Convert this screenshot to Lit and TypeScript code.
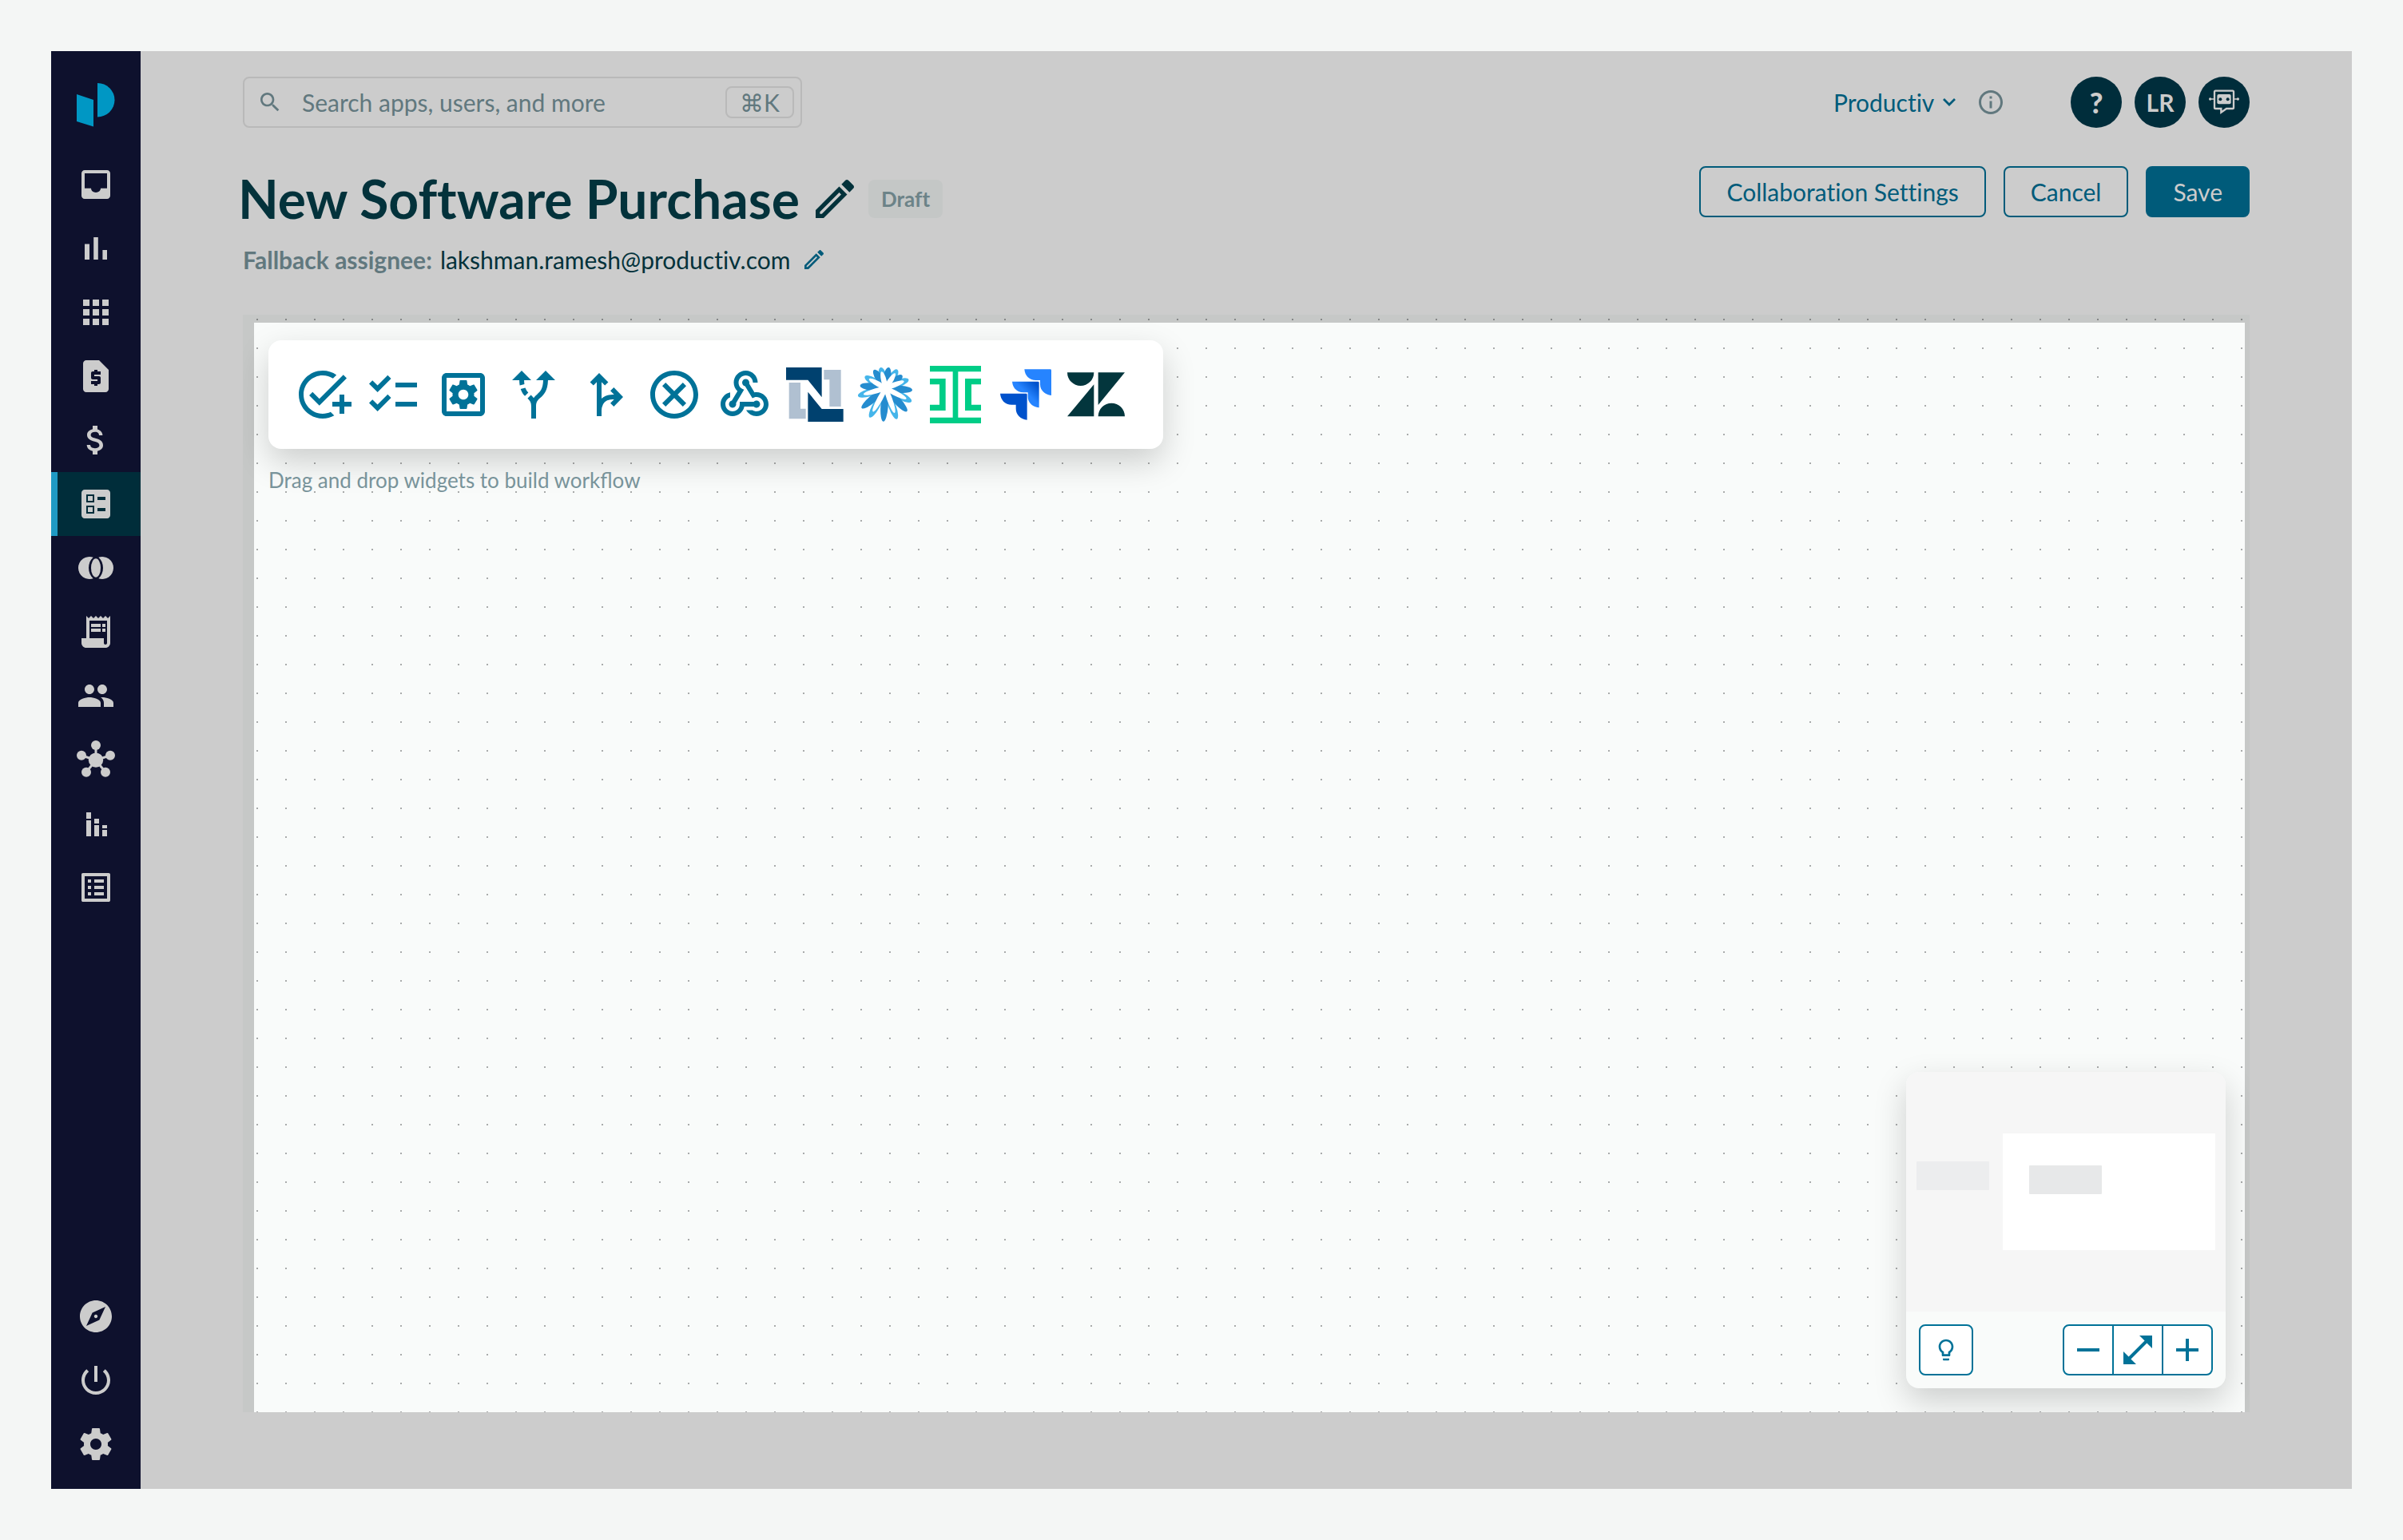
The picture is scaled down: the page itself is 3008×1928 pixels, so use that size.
import { LitElement, html, css, svg, type TemplateResult } from 'lit';
import { customElement, property } from 'lit/decorators.js';
import { classMap } from 'lit/directives/class-map.js';

const GEAR =
  'M19.43 12.98c.04-.32.07-.64.07-.98s-.03-.66-.07-.98l2.11-1.65c.19-.15.24-.42.12-.64l-2-3.46c-.12-.22-.39-.3-.61-.22l-2.49 1c-.52-.4-1.08-.73-1.69-.98l-.38-2.65C14.46 2.18 14.25 2 14 2h-4c-.25 0-.46.18-.49.42l-.38 2.65c-.61.25-1.17.59-1.69.98l-2.49-1c-.23-.09-.49 0-.61.22l-2 3.46c-.13.22-.07.49.12.64l2.11 1.65c-.04.32-.07.65-.07.98s.03.66.07.98l-2.11 1.65c-.19.15-.24.42-.12.64l2 3.46c.12.22.39.3.61.22l2.49-1c.52.4 1.08.73 1.69.98l.38 2.65c.03.24.24.42.49.42h4c.25 0 .46-.18.49-.42l.38-2.65c.61-.25 1.17-.59 1.69-.98l2.49 1c.23.09.49 0 .61-.22l2-3.46c.12-.22.07-.49-.12-.64l-2.11-1.65zM12 15.5c-1.93 0-3.5-1.57-3.5-3.5s1.57-3.5 3.5-3.5 3.5 1.57 3.5 3.5-1.57 3.5-3.5 3.5z';
const PENCIL =
  'M14.06 9.02l.92.92L5.92 19H5v-.92l9.06-9.06M17.66 3c-.25 0-.51.1-.7.29l-1.83 1.83 3.75 3.75 1.83-1.83c.39-.39.39-1.02 0-1.41l-2.34-2.34c-.2-.2-.45-.29-.71-.29zm-3.6 3.19L3 17.25V21h3.75L17.81 9.94l-3.75-3.75z';

const path = (d: string) => svg`<path d=${d}></path>`;

const hubArms: [number, number][] = [[12, 3], [3, 9.4], [21, 9.4], [6, 19.9], [18, 19.9]];

/** Glyphs on a 24 unit grid. */
const icons: Record<string, TemplateResult> = {
  inbox: path('M19 3H4.99c-1.11 0-1.98.89-1.98 2L3 19c0 1.1.88 2 1.99 2H19c1.1 0 2-.9 2-2V5c0-1.11-.9-2-2-2zm0 11.4h-4c0 1.46-1.34 2.6-3 2.6s-3-1.14-3-2.6H4.99V5H19v9.4z'),
  insights: path('M5 9.2h3V19H5zM10.6 5h2.8v14h-2.8zm5.6 8H19v6h-2.8z'),
  apps: path('M4 8h4V4H4v4zm6 12h4v-4h-4v4zm-6 0h4v-4H4v4zm0-6h4v-4H4v4zm6 0h4v-4h-4v4zm6-10v4h4V4h-4zm-6 4h4V4h-4v4zm6 6h4v-4h-4v4zm0 6h4v-4h-4v4z'),
  quote: path('M14 2H6c-1.1 0-1.99.9-1.99 2L4 20c0 1.1.89 2 1.99 2H18c1.1 0 2-.9 2-2V8l-6-6zm1 9h-4v1h3c.55 0 1 .45 1 1v3c0 .55-.45 1-1 1h-1v1h-2v-1H9v-2h4v-1h-3c-.55 0-1-.45-1-1v-3c0-.55.45-1 1-1h1V8h2v1h2v2z'),
  spend: path('M11.8 10.9c-2.27-.59-3-1.2-3-2.15 0-1.09 1.01-1.85 2.7-1.85 1.78 0 2.44.85 2.5 2.1h2.21c-.07-1.72-1.12-3.3-3.21-3.81V3h-3v2.16c-1.94.42-3.5 1.68-3.5 3.61 0 2.31 1.91 3.46 4.7 4.13 2.5.6 3 1.48 3 2.41 0 .69-.49 1.79-2.7 1.79-2.06 0-2.87-.92-2.98-2.1h-2.2c.12 2.19 1.76 3.42 3.68 3.83V21h3v-2.15c1.95-.37 3.5-1.5 3.5-3.55 0-2.84-2.43-3.81-4.7-4.4z'),
  workflows: path('M13 9.5h5v-2h-5v2zm0 7h5v-2h-5v2zm6 4.5H5c-1.1 0-2-.9-2-2V5c0-1.1.9-2 2-2h14c1.1 0 2 .9 2 2v14c0 1.1-.9 2-2 2zM6 11h5V6H6v5zm1-4h3v3H7V7zM6 18h5v-5H6v5zm1-4h3v3H7v-3z'),
  overlap: svg`<path d="M10.33 5.4A7 7 0 1 0 10.33 18.6C8.5 17 7.5 14.6 7.5 12S8.5 7 10.33 5.4zM13.67 5.4A7 7 0 1 1 13.67 18.6C15.5 17 16.5 14.6 16.5 12S15.5 7 13.67 5.4z"></path><ellipse cx="12" cy="12" rx="3" ry="5.9"></ellipse>`,
  receipt: path('M19.5 3.5L18 2l-1.5 1.5L15 2l-1.5 1.5L12 2l-1.5 1.5L9 2 7.5 3.5 6 2v14H3v3c0 1.66 1.34 3 3 3h12c1.66 0 3-1.34 3-3V2l-1.5 1.5zM19 19c0 .55-.45 1-1 1s-1-.45-1-1v-3H8V5h11v14zM9 7h6v2H9zm7 0h2v2h-2zm-7 3h6v2H9zm7 0h2v2h-2z'),
  people: path('M16 11c1.66 0 2.99-1.34 2.99-3S17.66 5 16 5c-1.66 0-3 1.34-3 3s1.34 3 3 3zm-8 0c1.66 0 2.99-1.34 2.99-3S9.66 5 8 5C6.34 5 5 6.34 5 8s1.34 3 3 3zm0 2c-2.33 0-7 1.17-7 3.5V19h14v-2.5c0-2.33-4.67-3.5-7-3.5zm8 0c-.29 0-.62.02-.97.05 1.16.84 1.97 1.97 1.97 3.45V19h6v-2.5c0-2.33-4.67-3.5-7-3.5z'),
  hub: svg`<circle cx="12" cy="12.3" r="4.6"></circle>${hubArms.map(
    ([x, y]) => svg`<circle cx=${x} cy=${y} r="3"></circle><path d=${`M12 12.3L${x} ${y}`} stroke="currentColor" stroke-width="1.5"></path>`
  )}`,
  stacked: path('M6 10h3v10H6zM6 5h3v4H6zm10 11h3v4h-3zm0-3h3v2h-3zm-5 0h3v7h-3zm0-4h3v3h-3z'),
  list: path('M19 5v14H5V5h14m1.1-2H3.9c-.5 0-.9.4-.9.9v16.2c0 .4.4.9.9.9h16.2c.4 0 .9-.5.9-.9V3.9c0-.5-.5-.9-.9-.9zM11 7h6v2h-6V7zm0 4h6v2h-6v-2zm0 4h6v2h-6zM7 7h2v2H7zm0 4h2v2H7zm0 4h2v2H7z'),
  explore: path('M12 10.9c-.61 0-1.1.49-1.1 1.1s.49 1.1 1.1 1.1c.61 0 1.1-.49 1.1-1.1s-.49-1.1-1.1-1.1zM12 2C6.48 2 2 6.48 2 12s4.48 10 10 10 10-4.48 10-10S17.52 2 12 2zm2.19 12.19L6 18l3.81-8.19L18 6l-3.81 8.19z'),
  power: path('M13 3h-2v10h2V3zm4.83 2.17l-1.42 1.42C17.99 7.86 19 9.81 19 12c0 3.87-3.13 7-7 7s-7-3.13-7-7c0-2.19 1.01-4.14 2.58-5.42L6.17 5.17C4.23 6.82 3 9.26 3 12c0 4.97 4.03 9 9 9s9-4.03 9-9c0-2.74-1.23-5.18-3.17-6.83z'),
  settings: path(GEAR),
  search: path('M15.5 14h-.79l-.28-.27C15.41 12.59 16 11.11 16 9.5 16 5.91 13.09 3 9.5 3S3 5.91 3 9.5 5.91 16 9.5 16c1.61 0 3.09-.59 4.23-1.57l.27.28v.79l5 4.99L20.49 19l-4.99-5zm-6 0C7.01 14 5 11.99 5 9.5S7.01 5 9.5 5 14 7.01 14 9.5 11.99 14 9.5 14z'),
  info: path('M11 7h2v2h-2zm0 4h2v6h-2zm1-9C6.48 2 2 6.48 2 12s4.48 10 10 10 10-4.48 10-10S17.52 2 12 2zm0 18c-4.41 0-8-3.59-8-8s3.59-8 8-8 8 3.59 8 8-3.59 8-8 8z'),
  pencil: path(PENCIL),
  task: path('M22 5.18L10.59 16.6l-4.24-4.24 1.41-1.41 2.83 2.83 10-10L22 5.18zM12 20c-4.41 0-8-3.59-8-8s3.59-8 8-8c1.57 0 3.04.46 4.28 1.25l1.45-1.45C16.1 2.67 14.13 2 12 2 6.48 2 2 6.48 2 12s4.48 10 10 10c1.73 0 3.36-.44 4.78-1.22l-1.5-1.5c-1 .46-2.11.72-3.28.72zm7-5h-3v2h3v3h2v-3h3v-2h-3v-3h-2v3z'),
  checklist: path('M22 7h-9v2h9V7zm0 8h-9v2h9v-2zM5.54 11L2 7.46l1.41-1.41 2.12 2.12 4.24-4.24 1.41 1.41L5.54 11zm0 8L2 15.46l1.41-1.41 2.12 2.12 4.24-4.24 1.41 1.41L5.54 19z'),
  automation: svg`<path fill-rule="evenodd" d="M5 3h14c1.1 0 2 .9 2 2v14c0 1.1-.9 2-2 2H5c-1.1 0-2-.9-2-2V5c0-1.1.9-2 2-2zM5 5v14h14V5z"></path><path transform="translate(4.8 4.8) scale(.6)" d=${GEAR}></path>`,
  branch: path('M9.78 11.16l-1.42 1.42c-.68-.69-1.34-1.58-1.79-2.94l1.94-.49c.32.89.77 1.5 1.27 2.01zM11 6L7 2 3 6h3.02c.02.81.08 1.54.19 2.17l1.94-.49C8.08 7.2 8.03 6.63 8.02 6H11zm10 0l-4-4-4 4h2.99c-.1 3.68-1.28 4.75-2.54 5.88-.5.44-1.01.92-1.45 1.55-.34-.49-.73-.88-1.13-1.24L9.46 13.6c.93.85 1.54 1.54 1.54 3.4v5h2v-5c0-2.02.71-2.66 1.79-3.63 1.38-1.24 3.08-2.78 3.2-7.37H21z'),
  fork: svg`<path d="M10 21V4.5M6.9 7.5L10 4.4l3.1 3.1M10 18.5C10.2 14.8 12.4 13 15.6 13h2.6M15.4 9.7l3.2 3.3-3.2 3.3" fill="none" stroke="currentColor" stroke-width="2"></path>`,
  stop: path('M12 2C6.47 2 2 6.47 2 12s4.47 10 10 10 10-4.47 10-10S17.53 2 12 2zm0 18c-4.41 0-8-3.59-8-8s3.59-8 8-8 8 3.59 8 8-3.59 8-8 8zm3.59-13L12 10.59 8.41 7 7 8.41 10.59 12 7 15.59 8.41 17 12 13.41 15.59 17 17 15.59 13.41 12 17 8.41z'),
  webhook: path('M10 15h5.88c.27-.31.67-.5 1.12-.5.83 0 1.5.67 1.5 1.5s-.67 1.5-1.5 1.5c-.44 0-.84-.19-1.12-.5H11.9c-.46 2.28-2.48 4-4.9 4-2.76 0-5-2.24-5-5 0-2.42 1.72-4.44 4-4.9v2.07c-1.16.41-2 1.53-2 2.83 0 1.65 1.35 3 3 3s3-1.35 3-3v-1zm2.5-11c1.65 0 3 1.35 3 3h2c0-2.76-2.24-5-5-5s-5 2.24-5 5c0 1.43.6 2.71 1.55 3.62l-2.35 3.9c-.68.14-1.2.75-1.2 1.48 0 .83.67 1.5 1.5 1.5s1.5-.67 1.5-1.5c0-.16-.02-.31-.07-.45l3.38-5.63C10.49 9.61 9.5 8.42 9.5 7c0-1.65 1.35-3 3-3zm4.5 9c-.64 0-1.23.2-1.72.54l-3.05-5.07C11.53 8.35 11 7.74 11 7c0-.83.67-1.5 1.5-1.5S14 6.17 14 7c0 .15-.02.29-.06.43l2.19 3.65c.28-.05.57-.08.87-.08 2.76 0 5 2.24 5 5s-2.24 5-5 5c-1.85 0-3.47-1.01-4.33-2.5h2.67c.48.32 1.05.5 1.66.5 1.65 0 3-1.35 3-3s-1.35-3-3-3z'),
  bulb: path('M9 21c0 .55.45 1 1 1h4c.55 0 1-.45 1-1v-1H9v1zm3-19C8.14 2 5 5.14 5 9c0 2.38 1.19 4.47 3 5.74V17c0 .55.45 1 1 1h6c.55 0 1-.45 1-1v-2.26c1.81-1.27 3-3.36 3-5.74 0-3.86-3.14-7-7-7zm2.85 11.1l-.85.6V16h-4v-2.3l-.85-.6C7.8 12.16 7 10.63 7 9c0-2.76 2.24-5 5-5s5 2.24 5 5c0 1.63-.8 3.16-2.15 4.1z'),
  minus: path('M19 13H5v-2h14v2z'),
  expand: path('M21 11V3h-8l3.29 3.29-10 10L3 13v8h8l-3.29-3.29 10-10z'),
  plus: path('M19 13h-6v6h-2v-6H5v-2h6V5h2v6h6v2z'),
};

/** Petals of the blue bloom: tip coordinates, drawn outward from the centre. */
const BLOOM_X = 110;
const BLOOM_Y = 84;
const darkTips: [number, number][] = [[121, 6], [66, 15], [172, 36], [14, 74], [210, 91], [20, 159], [190, 171], [101, 209]];
const lightTips: [number, number][] = [[91, 6], [154, 14], [196, 51], [32, 40], [6, 113], [207, 134], [50, 194], [152, 200]];

function petal([x, y]: [number, number], from: number, to: number, ry: number, fill: string) {
  const dx = x - BLOOM_X;
  const dy = y - BLOOM_Y;
  const len = Math.hypot(dx, dy);
  const angle = (Math.atan2(dy, dx) * 180) / Math.PI;
  return svg`<ellipse cx=${(len * (from + to)) / 2} cy="0" rx=${(len * (to - from)) / 2} ry=${ry} fill=${fill}
    transform=${`translate(${BLOOM_X} ${BLOOM_Y}) rotate(${angle.toFixed(1)})`}></ellipse>`;
}

/** Brand marks on a 216 unit grid. */
const brands: Record<string, TemplateResult> = {
  netsuite: svg`
    <path fill="#b0c0d1" d="M11 63H54V161H74V199H11zM142 15H206V153H163V52H142z"></path>
    <path fill="#00416f" d="M0 6H134V118L82 53H0zM82 98L134 162H215V210H82z"></path>`,
  bloom: svg`
    ${lightTips.map((t) => petal(t, 0.2, 1, 14, '#45b5ea'))}
    ${darkTips.map((t) => petal(t, 0.1, 1, 14, '#258ccf'))}
    ${lightTips.map((t) => petal(t, -0.1, 0.8, 10, '#fff'))}
    <circle cx=${BLOOM_X} cy=${BLOOM_Y} r="22" fill="#fff"></circle>`,
  ironclad: svg`<path fill="#00cd87" d="M12 0H204V22H118V194H204V216H12V194H98V22H12zM12 48H71V168H12V146H48V70H12zM204 48H144V168H204V146H168V70H204z"></path>`,
  jira: svg`
    <defs>
      <linearGradient id="fold" x1="156" y1="62" x2="114" y2="106" gradientUnits="userSpaceOnUse">
        <stop offset=".18" stop-color="#0052cc"></stop><stop offset="1" stop-color="#2684ff"></stop>
      </linearGradient>
    </defs>
    <path fill="#2684ff" d="M103 13H200a4 4 0 0 1 4 4V111C180 109 162 92 162 70V54H146C122 54 105 38 103 13z"></path>
    <path fill="url(#fold)" d="M57 59H154a4 4 0 0 1 4 4V157C134 155 116 138 116 116V100H100C76 100 59 84 57 59z"></path>
    <path fill="#0052cc" d="M12 104H109a4 4 0 0 1 4 4V203C89 200 71 184 71 161V146H55C31 146 14 129 12 104z"></path>`,
  zendesk: svg`<path fill="#03363d" d="M0 25H100A50 50 0 0 1 0 25zM100 70V190H0zM116 25H216L116 147zM116 190A50 50 0 0 1 216 190z"></path>`,
};

@customElement('ui-icon')
class UiIcon extends LitElement {
  static styles = css`
    :host { display: flex; flex: none; width: var(--icon-size, 48px); height: var(--icon-size, 48px); }
    .glyph { width: 100%; height: 100%; display: block; fill: currentColor; }
  `;
  @property() name = '';
  render() {
    const brand = brands[this.name];
    return html`<svg class="glyph" viewBox=${brand ? '0 0 216 216' : '0 0 24 24'} aria-hidden="true">${brand ?? icons[this.name]}</svg>`;
  }
}

@customElement('side-nav')
class SideNav extends LitElement {
  static styles = css`
    :host { display: flex; flex: none; flex-direction: column; width: 112px; background: #0e112d; color: #ccc; padding: 40px 0 16px; box-sizing: border-box; }
    .logo { align-self: center; width: 48px; height: 55px; display: block; margin-bottom: 32px; }
    .group { display: flex; flex-direction: column; }
    .end { margin-top: auto; }
    .item { display: flex; align-items: center; justify-content: center; height: 80px; color: inherit; }
    .active { background: linear-gradient(to right, #1f9ac4 8px, #002d3a 8px); }
  `;
  private link(name: string, label: string) {
    const active = name === 'workflows';
    return html`<a href="#${name}" class=${classMap({ item: true, active })} aria-label=${label} aria-current=${active ? 'page' : 'false'}><ui-icon name=${name}></ui-icon></a>`;
  }
  render() {
    const main: [string, string][] = [
      ['inbox', 'Inbox'], ['insights', 'Insights'], ['apps', 'Apps'], ['quote', 'Quotes'], ['spend', 'Spend'], ['workflows', 'Workflows'],
      ['overlap', 'Overlap'], ['receipt', 'Invoices'], ['people', 'People'], ['hub', 'Integrations'], ['stacked', 'Usage'], ['list', 'Reports'],
    ];
    const end: [string, string][] = [['explore', 'Explore'], ['power', 'Sign out'], ['settings', 'Settings']];
    return html`
      <svg class="logo" viewBox="0 0 48 55" fill="#0097c4" aria-hidden="true">
        <path d="M0 14L21 21V54.4L0 48z"></path><path d="M26 0a21.5 21.2 0 0 1 0 42.4z"></path>
      </svg>
      <nav class="group" aria-label="Main">${main.map(([n, l]) => this.link(n, l))}</nav>
      <nav class="group end" aria-label="Account">${end.map(([n, l]) => this.link(n, l))}</nav>`;
  }
}

const controls = css`
  button, input, select { font: inherit; color: inherit; background: none; border: 0; padding: 0; margin: 0; border-radius: 0; }
  button { display: flex; align-items: center; justify-content: center; cursor: pointer; }
`;

@customElement('top-bar')
class TopBar extends LitElement {
  static styles = [controls, css`
    :host { display: flex; align-items: center; justify-content: space-between; height: 64px; }
    .search { display: flex; align-items: center; box-sizing: border-box; width: 700px; height: 64px; padding: 0 8px 0 16px; border: 2px solid #b9b9b9; border-radius: 8px; color: #61787e; --icon-size: 32px; }
    .field { flex: 1; min-width: 0; height: 40px; margin-left: 24px; outline: none; }
    .field::placeholder { color: #61787e; opacity: 1; }
    .key { box-sizing: border-box; height: 40px; padding: 0 16px; border: 2px solid #b9b9b9; border-radius: 8px; font: inherit; line-height: 36px; }
    .tools { display: flex; align-items: center; }
    .org { display: flex; align-items: center; gap: 10px; color: #005b7a; }
    .pick { appearance: none; outline: none; }
    .chevron { width: 16px; height: 10px; display: block; }
    .info { margin: 0 82px 0 26px; color: #61787e; --icon-size: 36px; }
    .round { display: flex; gap: 16px; }
    .dot { width: 64px; height: 64px; border-radius: 50%; background: #002d3b; color: #ccc; font-weight: 700; overflow: hidden; }
    .help { font-size: 36px; font-weight: 900; }
    .bot { width: 64px; height: 64px; display: block; }
  `];
  render() {
    return html`
      <label class="search">
        <ui-icon name="search"></ui-icon>
        <input class="field" type="search" placeholder="Search apps, users, and more" aria-label="Search apps, users, and more" />
        <kbd class="key">⌘K</kbd>
      </label>
      <div class="tools">
        <label class="org">
          <select class="pick" aria-label="Organization"><option>Productiv</option></select>
          <svg class="chevron" viewBox="0 0 16 10" fill="none" stroke="#005b7a" stroke-width="2.8" aria-hidden="true"><path d="M1 1l7 7 7-7"></path></svg>
        </label>
        <button class="info" aria-label="About this organization"><ui-icon name="info"></ui-icon></button>
        <div class="round">
          <button class="dot help" aria-label="Help">?</button>
          <button class="dot">LR</button>
          <button class="dot" aria-label="Assistant">
            <svg class="bot" viewBox="0 0 192 192" aria-hidden="true">
              <path d="M64 53H128a4 4 0 0 1 4 4V116a4 4 0 0 1-4 4H105L85 134V120H64a4 4 0 0 1-4-4V57a4 4 0 0 1 4-4z" fill="none" stroke="#ccc" stroke-width="7"></path>
              <rect x="70" y="66" width="52" height="37" rx="6" fill="#ccc"></rect>
              <circle cx="82" cy="85" r="6" fill="#002d3b"></circle><circle cx="110" cy="85" r="6" fill="#002d3b"></circle>
              <path d="M44 84H60M132 84H148" stroke="#ccc" stroke-width="5"></path>
              <circle cx="44" cy="84" r="5" fill="#ccc"></circle><circle cx="148" cy="84" r="5" fill="#ccc"></circle>
            </svg>
          </button>
        </div>
      </div>`;
  }
}

@customElement('page-heading')
class PageHeading extends LitElement {
  static styles = [controls, css`
    :host { display: flex; align-items: flex-start; justify-content: space-between; color: #03323b; }
    .title-row { display: flex; align-items: center; height: 64px; margin: 9px 0 26px -6px; }
    .title { margin: 0 12px 0 0; font-size: 66px; line-height: 64px; font-weight: 700; }
    .rename { --icon-size: 64px; }
    .status { margin-left: 10px; padding: 0 16px; border-radius: 8px; background: #c4c7c6; color: #6c8388; font-size: 26px; line-height: 48px; font-weight: 700; }
    .assignee { display: flex; align-items: center; margin: 0; line-height: 36px; }
    .label { font-weight: 700; color: #61787e; margin-right: 10px; }
    .edit { margin-left: 14px; color: #005b7a; --icon-size: 32px; }
    .actions { display: flex; gap: 22px; color: #005b7a; }
    .action { height: 64px; padding: 0 32px; border: 2px solid #005b7a; border-radius: 8px; }
    .primary { background: #005b7a; color: #ccc; }
  `];
  render() {
    return html`
      <div>
        <div class="title-row">
          <h1 class="title">New Software Purchase</h1>
          <button class="rename" aria-label="Rename workflow"><ui-icon name="pencil"></ui-icon></button>
          <span class="status">Draft</span>
        </div>
        <p class="assignee">
          <span class="label">Fallback assignee:</span><span>lakshman.ramesh@productiv.com</span>
          <button class="edit" aria-label="Edit fallback assignee"><ui-icon name="pencil"></ui-icon></button>
        </p>
      </div>
      <div class="actions">
        <button class="action">Collaboration Settings</button>
        <button class="action">Cancel</button>
        <button class="action primary">Save</button>
      </div>`;
  }
}

@customElement('workflow-canvas')
class WorkflowCanvas extends LitElement {
  static styles = [controls, css`
    :host {
      display: flex; box-sizing: border-box; padding: 10px 6px 0 14px; background-color: #c6c8c7; overflow: hidden;
      background-image: radial-gradient(circle at 18px 6px, #858787 1px, transparent 1px); background-size: 36px 36px;
    }
    .board {
      flex: 1; display: flex; flex-direction: column; align-items: flex-start; padding: 22px 24px 30px 18px; background-color: #f9fbfa;
      background-image: radial-gradient(circle at 4px 32px, #a9abab 1px, transparent 1px); background-size: 36px 36px;
    }
    .widgets { display: flex; gap: 16px; padding: 32px 48px 32px 32px; background: #fff; border-radius: 16px; box-shadow: 0 16px 40px rgba(0, 0, 0, 0.18); color: #007298; --icon-size: 72px; }
    .widget { cursor: grab; }
    .hint { margin: 23px 0 0; font-size: 26px; line-height: 32px; color: #78939a; font-variant-ligatures: normal; }
    .overview { align-self: flex-end; margin-top: auto; width: 400px; background: #f9fbfa; border-radius: 16px; overflow: hidden; box-shadow: 0 16px 40px rgba(0, 0, 0, 0.18); }
    .map { display: block; width: 100%; background: #f6f6f6; }
    .controls { display: flex; justify-content: space-between; padding: 16px; color: #007298; }
    .tool { box-sizing: border-box; width: 64px; height: 64px; border: 2px solid #007298; background: #fff; }
    .tips { width: 68px; border-radius: 8px; --icon-size: 32px; }
    .zoom { display: flex; }
    .zoom .tool + .tool { margin-left: -2px; }
    .zoom .tool:first-child { border-radius: 8px 0 0 8px; }
    .zoom .tool:last-child { border-radius: 0 8px 8px 0; }
  `];
  render() {
    const widgets: [string, string][] = [
      ['task', 'Task'], ['checklist', 'Checklist'], ['automation', 'Automation'], ['branch', 'Conditional branch'], ['fork', 'Parallel branch'], ['stop', 'End'],
      ['webhook', 'Webhook'], ['netsuite', 'NetSuite'], ['bloom', 'Coupa'], ['ironclad', 'Ironclad'], ['jira', 'Jira'], ['zendesk', 'Zendesk'],
    ];
    const zoom: [string, string][] = [['minus', 'Zoom out'], ['expand', 'Fit to screen'], ['plus', 'Zoom in']];
    return html`
      <div class="board">
        <div class="widgets" role="toolbar" aria-label="Widgets">
          ${widgets.map(([n, l]) => html`<button class="widget" aria-label=${l}><ui-icon name=${n}></ui-icon></button>`)}
        </div>
        <p class="hint">Drag and drop widgets to build workflow</p>
        <section class="overview" aria-label="Overview">
          <svg class="map" viewBox="0 0 400 300" aria-hidden="true">
            <rect x="121" y="77" width="266" height="146" fill="#fff"></rect>
            <rect x="13" y="112" width="91" height="36" rx="1" fill="#ecedee"></rect>
            <rect x="154" y="117" width="91" height="36" rx="1" fill="#e7e8e9"></rect>
          </svg>
          <div class="controls">
            <button class="tool tips" aria-label="Tips"><ui-icon name="bulb"></ui-icon></button>
            <div class="zoom">${zoom.map(([n, l]) => html`<button class="tool" aria-label=${l}><ui-icon name=${n}></ui-icon></button>`)}</div>
          </div>
        </section>
      </div>`;
  }
}

@customElement('app-root')
class AppRoot extends LitElement {
  static styles = css`
    :host {
      display: flex; box-sizing: border-box; min-height: 100vh; padding: 64px; background: #f4f6f5;
      font-family: Lato, "Liberation Sans", sans-serif; font-size: 30px; font-variant-ligatures: none;
    }
    .main { flex: 1; min-width: 0; display: flex; flex-direction: column; padding: 32px 128px 96px; background: #ccc; }
    .heading { margin: 48px 0 51px; }
    .canvas { flex: 1; }
  `;
  render() {
    return html`
      <side-nav></side-nav>
      <main class="main">
        <top-bar></top-bar>
        <page-heading class="heading"></page-heading>
        <workflow-canvas class="canvas"></workflow-canvas>
      </main>`;
  }
}
